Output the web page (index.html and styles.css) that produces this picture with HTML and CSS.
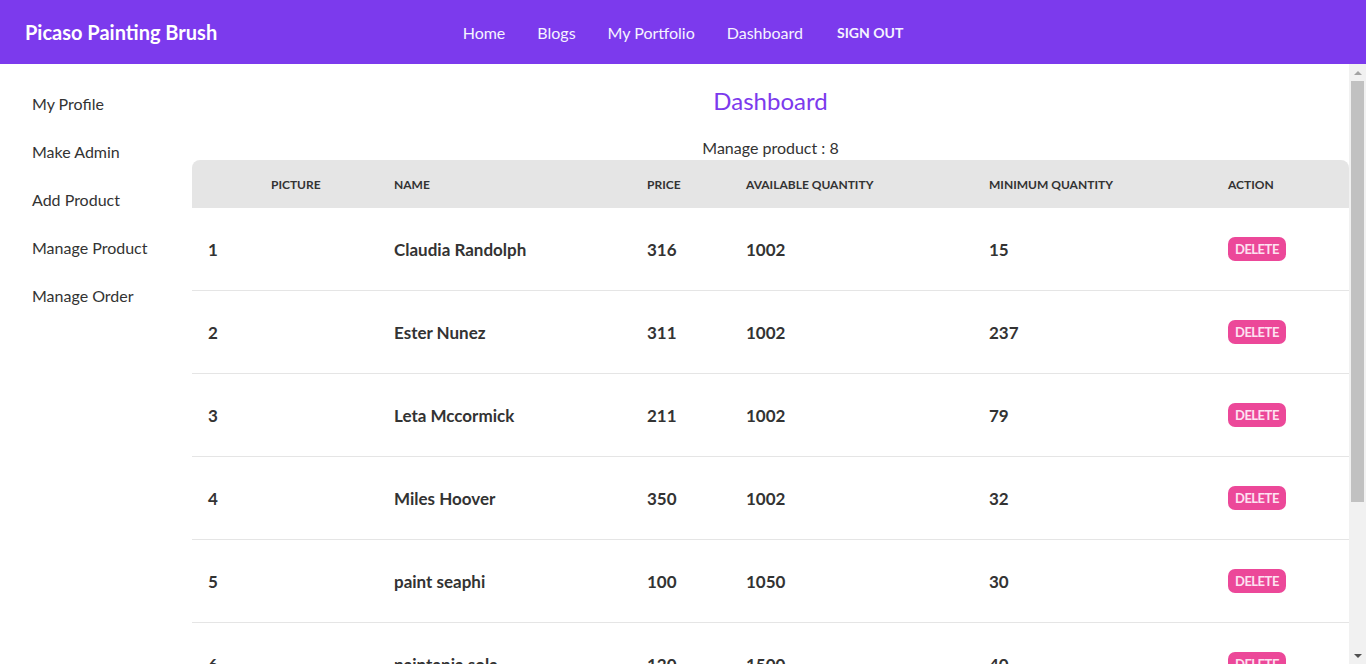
FILE: index.html
```html
<!DOCTYPE html>
<html lang="en">
<head>
<meta charset="utf-8">
<title>Picaso Painting Brush - Dashboard</title>
<link rel="stylesheet" href="styles.css">
</head>
<body>
<header class="navbar">
  <a class="brand" href="#">Picaso Painting Brush</a>
  <nav class="nav-links">
    <a href="#">Home</a>
    <a href="#">Blogs</a>
    <a href="#">My Portfolio</a>
    <a href="#">Dashboard</a>
    <button class="signout">SIGN OUT</button>
  </nav>
  <div class="nav-end"></div>
</header>
<div class="page-body">
  <div class="layout">
    <aside class="sidebar">
      <a href="#">My Profile</a>
      <a href="#">Make Admin</a>
      <a href="#">Add Product</a>
      <a href="#">Manage Product</a>
      <a href="#">Manage Order</a>
    </aside>
    <main class="content">
      <h1 class="title">Dashboard</h1>
      <p class="count">Manage product : 8</p>
      <table class="products">
        <thead>
          <tr>
            <th class="c-idx"></th>
            <th class="c-pic">Picture</th>
            <th class="c-name">Name</th>
            <th class="c-price">Price</th>
            <th class="c-avail">Available Quantity</th>
            <th class="c-min">Minimum Quantity</th>
            <th class="c-act">Action</th>
          </tr>
        </thead>
        <tbody>
          <tr><td>1</td><td></td><td>Claudia Randolph</td><td>316</td><td>1002</td><td>15</td><td><button class="del">DELETE</button></td></tr>
          <tr><td>2</td><td></td><td>Ester Nunez</td><td>311</td><td>1002</td><td>237</td><td><button class="del">DELETE</button></td></tr>
          <tr><td>3</td><td></td><td>Leta Mccormick</td><td>211</td><td>1002</td><td>79</td><td><button class="del">DELETE</button></td></tr>
          <tr><td>4</td><td></td><td>Miles Hoover</td><td>350</td><td>1002</td><td>32</td><td><button class="del">DELETE</button></td></tr>
          <tr><td>5</td><td></td><td>paint seaphi</td><td>100</td><td>1050</td><td>30</td><td><button class="del">DELETE</button></td></tr>
          <tr><td>6</td><td></td><td>paintapia sola</td><td>120</td><td>1500</td><td>40</td><td><button class="del">DELETE</button></td></tr>
          <tr><td>7</td><td></td><td>Oil Flat Brush</td><td>150</td><td>1200</td><td>25</td><td><button class="del">DELETE</button></td></tr>
          <tr><td>8</td><td></td><td>Round Detail Brush</td><td>90</td><td>1100</td><td>50</td><td><button class="del">DELETE</button></td></tr>
        </tbody>
      </table>
    </main>
  </div>
  <div class="scrollbar" aria-hidden="true">
    <span class="sb-btn"><i class="arrow-up"></i></span>
    <span class="sb-thumb"></span>
    <span class="sb-space"></span>
    <span class="sb-btn"><i class="arrow-down"></i></span>
  </div>
</div>
</body>
</html>
```
FILE: styles.css
```css
* { box-sizing: border-box; }
html, body { height: 100%; }
body {
  margin: 0;
  font-family: Lato, "Noto Sans", sans-serif;
  color: #333;
  display: flex;
  flex-direction: column;
  overflow: hidden;
  background: #fff;
}
a { text-decoration: none; color: inherit; }

.navbar {
  height: 64px;
  flex: none;
  background: #7c3aed;
  display: grid;
  grid-template-columns: 1fr auto 1fr;
  align-items: center;
  padding: 0 25px;
}
.brand {
  color: #fff;
  font-size: 20px;
  font-weight: 700;
}
.nav-links {
  display: flex;
  align-items: center;
  gap: 32px;
}
.nav-links a {
  color: #f5f3ff;
  font-size: 16px;
}
.signout {
  background: none;
  border: 0;
  padding: 0 0 0 2px;
  color: #f5f3ff;
  font-family: inherit;
  font-size: 14px;
  font-weight: 700;
  cursor: pointer;
}

.page-body {
  flex: 1;
  min-height: 0;
  display: flex;
}
.layout {
  flex: 1;
  min-width: 0;
  display: flex;
  align-items: flex-start;
  overflow-y: auto;
  scrollbar-width: none;
}

.scrollbar {
  width: 17px;
  flex: none;
  background: #f1f1f1;
  display: flex;
  flex-direction: column;
}
.sb-btn {
  height: 17px;
  flex: none;
  display: flex;
  align-items: center;
  justify-content: center;
}
.arrow-up, .arrow-down {
  width: 0;
  height: 0;
  border-left: 4px solid transparent;
  border-right: 4px solid transparent;
}
.arrow-up { border-bottom: 4px solid #a3a3a3; }
.arrow-down { border-top: 4px solid #505050; }
.sb-thumb {
  height: 421px;
  margin: 0 2px;
  background: #c1c1c1;
}
.sb-space { flex: 1; }

.sidebar {
  width: 192px;
  flex: none;
  padding: 16px 0 0 32px;
  display: flex;
  flex-direction: column;
}
.sidebar a {
  height: 48px;
  line-height: 48px;
  font-size: 16px;
  color: #333;
}

.content {
  flex: 1;
  min-width: 0;
}
.title {
  margin: 21px 0 0;
  font-size: 24px;
  line-height: 32px;
  font-weight: 400;
  color: #7c3aed;
  text-align: center;
}
.count {
  margin: 19px 0 0;
  font-size: 16px;
  line-height: 24px;
  text-align: center;
}

.products {
  width: 100%;
  border-collapse: separate;
  border-spacing: 0;
  table-layout: fixed;
}
.products th {
  background: #e5e5e5;
  height: 48px;
  padding: 0 16px;
  font-size: 12px;
  font-weight: 700;
  text-transform: uppercase;
  text-align: left;
  color: #333;
}
.products th:first-child { border-top-left-radius: 8px; }
.products th:last-child { border-top-right-radius: 8px; }
.c-idx { width: 63px; }
.c-pic { width: 123px; }
.c-name { width: 253px; }
.c-price { width: 99px; }
.c-avail { width: 243px; }
.c-min { width: 239px; }

.products td {
  height: 83px;
  padding: 0 16px;
  border-bottom: 1px solid #e5e5e5;
  font-size: 17px;
  font-weight: 700;
  color: #333;
  white-space: nowrap;
}
.del {
  background: #ec4899;
  color: #fde2f1;
  border: 0;
  border-radius: 7px;
  height: 24px;
  padding: 0 7px;
  font-family: inherit;
  font-size: 13px;
  font-weight: 700;
  letter-spacing: -0.5px;
  cursor: pointer;
}
```
